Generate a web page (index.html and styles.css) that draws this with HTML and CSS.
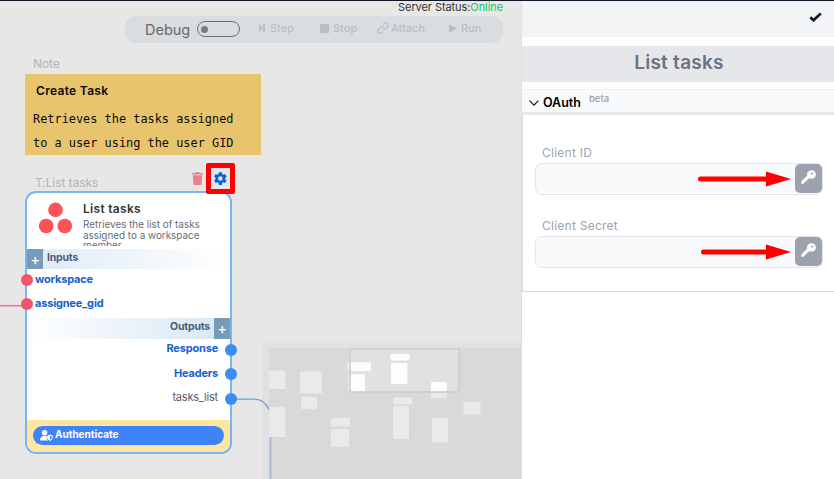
FILE: index.html
```html
<!DOCTYPE html>
<html lang="en">
<head>
<meta charset="utf-8">
<title>List tasks</title>
<link rel="stylesheet" href="styles.css">
</head>
<body>
<div class="app">
  <main class="canvas">
    <div class="status">Server Status:<span class="online">Online</span></div>
    <div class="toolbar">
      <span class="debug">Debug</span>
      <span class="toggle"></span>
      <span class="tool step"><svg width="8" height="10" viewBox="0 0 8 10"><path d="M1 1l4 4-4 4zM5 1h2v8H5z"/></svg>Step</span>
      <span class="tool stop"><svg width="9" height="9" viewBox="0 0 9 9"><path d="M0 0h9v9H0z"/></svg>Stop</span>
      <span class="tool attach"><svg class="link" width="12" height="12" viewBox="0 0 24 24"><path d="M10 13a5 5 0 0 0 7.5.5l4-4a5 5 0 0 0-7-7L12 5M14 11a5 5 0 0 0-7.500-.5l-4 4a5 5 0 0 0 7 7L12 19"/></svg>Attach</span>
      <span class="tool run"><svg width="8" height="9" viewBox="0 0 8 9"><path d="M0 0l8 4.500-8 4.500z"/></svg>Run</span>
    </div>

    <div class="caption note-caption">Note</div>
    <section class="note">
      <h3>Create Task</h3>
      <p>Retrieves the tasks assigned<br>to a user using the user GID</p>
    </section>

    <div class="minimap">
      <svg width="252" height="131" viewBox="269 348 252 131">
        <path class="view" d="M350 349h109v43H350z"/>
        <g class="mini">
          <rect x="269" y="370.500" width="16.500" height="18.500" rx="1.500"/>
          <rect x="300" y="371.500" width="22" height="22" rx="1.500"/>
          <rect x="301" y="397" width="16" height="12" rx="1.500"/>
          <rect x="269" y="407" width="16.500" height="30" rx="1.500"/>
          <rect x="331" y="418" width="19" height="8.500" rx="1.500"/>
          <rect x="331" y="429" width="18" height="18" rx="1.500"/>
          <rect x="393" y="397.500" width="19" height="7" rx="1.500"/>
          <rect x="393" y="406" width="16" height="33" rx="1.500"/>
          <rect x="431" y="382" width="16" height="16.500" rx="1.500"/>
          <rect x="432" y="418" width="16" height="24.500" rx="1.500"/>
          <rect x="463.500" y="402" width="17" height="12.500" rx="1.500"/>
          <rect x="347" y="362" width="24" height="9" rx="1.500"/>
          <rect x="348" y="374" width="17" height="18" rx="1.500"/>
        </g>
        <g class="mini lit">
          <rect x="351" y="362.500" width="20" height="8.500" rx="1"/>
          <rect x="351" y="374.500" width="14" height="17" rx="1"/>
          <rect x="390.500" y="354" width="19" height="6.500" rx="1.500"/>
          <rect x="391" y="363" width="16.500" height="21" rx="1.500"/>
          <rect x="431" y="382" width="16" height="9.500" rx="1.500"/>
        </g>
        <path class="frame" d="M350 349h109v43H350z"/>
      </svg>
    </div>

    <svg class="wires" width="521" height="479" viewBox="0 0 521 479">
      <path class="wire-in" d="M0 305.700H27"/>
      <path class="wire-out" d="M231 399.200H254C261 399.200 266 403 269 409.500"/>
      <path class="wire-out faded" d="M270.500 437V479"/>
    </svg>

    <div class="caption node-caption">T:List tasks</div>
    <svg class="trash" width="11" height="13" viewBox="0 0 11 13"><path d="M0 1h3l1-1h3l1 1h3v1.500H0zM.8 3.300h9.400L9.600 12q-.1 1-1 1H2.400q-.9 0-1-1z"/></svg>
    <div class="highlight"><svg width="16" height="16" viewBox="0 0 24 24"><path d="M19.400 13a7.600 7.600 0 0 0 0-2l2.200-1.700c.2-.1.200-.4.100-.6l-2.100-3.600c-.1-.2-.4-.3-.6-.2l-2.600 1a7.500 7.500 0 0 0-1.700-1l-.4-2.700a.5.5 0 0 0-.5-.4H9.700a.5.5 0 0 0-.5.4l-.4 2.700a7.500 7.500 0 0 0-1.700 1l-2.600-1c-.2-.1-.5 0-.6.200L1.800 8.700c-.1.200-.1.500.1.600L4.100 11a7.600 7.600 0 0 0 0 2l-2.200 1.700c-.2.100-.2.400-.1.600l2.100 3.600c.1.200.4.300.6.200l2.600-1a7.500 7.500 0 0 0 1.700 1l.4 2.700c0 .2.200.4.500.4h4.100c.3 0 .5-.2.500-.4l.4-2.700a7.500 7.500 0 0 0 1.700-1l2.600 1c.2.100.5 0 .6-.2l2.100-3.600c.1-.2.100-.5-.1-.6zM11.750 8.400a3.600 3.600 0 1 1 0 7.200 3.600 3.600 0 0 1 0-7.200z"/></svg></div>

    <section class="node">
      <header class="node-head">
        <svg class="brand" width="34" height="32" viewBox="0 0 34 32"><circle cx="16.500" cy="7.900" r="7.300"/><circle cx="7.200" cy="24" r="7.300"/><circle cx="25.800" cy="24" r="7.300"/></svg>
        <div class="node-info">
          <h2>List tasks</h2>
          <p>Retrieves the list of tasks assigned to a workspace member</p>
        </div>
      </header>
      <div class="band inputs"><span class="plus">+</span><b>Inputs</b></div>
      <div class="ports in">
        <div class="port">workspace<i></i></div>
        <div class="port">assignee_gid<i></i></div>
      </div>
      <div class="band outputs"><b>Outputs</b><span class="plus">+</span></div>
      <div class="ports out">
        <div class="port">Response<i></i></div>
        <div class="port">Headers<i></i></div>
        <div class="port plain">tasks_list<i></i></div>
      </div>
      <footer class="node-foot">
        <div class="auth"><svg width="13" height="11" viewBox="0 0 13 11"><circle cx="4.600" cy="2.800" r="2.700"/><path d="M0 10.500c0-3 1.500-4.500 4-4.500h2l.7.300c0 2 .3 3.300 1.600 4.200zM10 4.500l3 1.200c0 2.500-1 4.300-3 5.200-2-.9-3-2.700-3-5.200z"/><path class="cut" d="M10 5.700v4c1.200-.7 1.900-1.800 2-3.300z"/></svg>Authenticate</div>
      </footer>
    </section>
  </main>

  <aside class="panel">
    <header class="panel-top"><svg width="13" height="10" viewBox="0 0 13 10"><path d="M1.300 5.200l3.200 3L11.800 1.400"/></svg></header>
    <h1>List tasks</h1>
    <div class="section-head"><svg width="10" height="6" viewBox="0 0 10 6"><path d="M.6.700L5 5.100 9.400.7"/></svg><b>OAuth</b><small>beta</small></div>
    <form class="fields">
      <label>Client ID</label>
      <div class="field">
        <svg class="arrow" width="94" height="16" viewBox="0 0 94 16"><path d="M3.500 8H70" class="shaft"/><path d="M69 .5L94 8 69 15.500z"/></svg>
        <span class="key"><svg width="15" height="14" viewBox="0 0 15 14"><path d="M10.300.2a4.200 4.200 0 1 1-.5 8.300L8.200 8.300 6.900 9.600 5.900 9.900 5.500 11.100 4.200 11.400 3.700 12.600 2.300 13.700H.3V11.500L6.200 5.600A4.200 4.200 0 0 1 10.300.2zM11.200 2.400a1.100 1.100 0 1 0 .01 0z"/></svg></span>
      </div>
      <label>Client Secret</label>
      <div class="field">
        <svg class="arrow" width="91" height="16" viewBox="0 0 91 16"><path d="M3.500 8H67" class="shaft"/><path d="M66 .5L91 8 66 15.500z"/></svg>
        <span class="key"><svg width="15" height="14" viewBox="0 0 15 14"><path d="M10.300.2a4.200 4.200 0 1 1-.5 8.300L8.200 8.300 6.900 9.600 5.900 9.900 5.500 11.100 4.200 11.400 3.700 12.600 2.300 13.700H.3V11.500L6.200 5.600A4.200 4.200 0 0 1 10.300.2zM11.200 2.400a1.100 1.100 0 1 0 .01 0z"/></svg></span>
      </div>
    </form>
  </aside>
</div>
</body>
</html>
```

FILE: styles.css
```css
* { box-sizing: border-box; }
body { margin: 0; font-family: Inter, "Liberation Sans", sans-serif; }
h1, h2, h3, p { margin: 0; }
svg { display: block; flex: none; }
.app { display: flex; width: 834px; height: 479px; border-top: 1px solid #111827; overflow: hidden; background: #fff; }

.canvas { position: relative; width: 521px; height: 479px; margin-top: -1px; border-top: 1px solid #111827; background: #e7e7e7; overflow: hidden; flex: none; }
.status { height: 15px; padding-right: 18px; text-align: right; font-size: 11px; line-height: 13px; color: #333; letter-spacing: -.08px; }
.online { color: #22c55e; }
.toolbar { display: flex; align-items: center; width: 378px; height: 27px; margin-left: 125px; padding-left: 20px; border-radius: 11px; background: #d9dde0; font-size: 11px; color: #bcbdbe; white-space: nowrap; }
.debug { width: 52px; margin-top: -1px; font-size: 14.500px; letter-spacing: 0; color: #68696b; }
.toggle { display: flex; align-items: center; width: 43px; height: 16px; margin-top: -1px; padding-left: 3px; border: 1px solid #6d6e70; border-radius: 8px; }
.toggle::before { content: ""; width: 7px; height: 7px; border-radius: 50%; background: #7d7d7d; }
.tool { display: flex; align-items: center; height: 24px; margin-top: -3px; font-weight: 500; }
.tool svg { fill: #bcbdbe; }
.tool .link { fill: none; stroke: #bcbdbe; stroke-width: 2.400; }
.step { margin-left: 18px; gap: 4px; width: 62px; }
.stop { gap: 4px; width: 57px; }
.attach { gap: 2px; width: 72px; }
.run { gap: 4px; }

.wires { position: absolute; left: 0; top: -1px; fill: none; }
.wire-in { stroke: #ee7386; stroke-width: 1.500; }
.wire-out { stroke: #7898dc; stroke-width: 1.300; }
.wire-out.faded { stroke: #abb9d5; stroke-width: 2; }
.caption { position: absolute; font-size: 12px; line-height: 14px; color: #b4b4b4; letter-spacing: -.08px; }
.note-caption { left: 33px; top: 56px; }
.node-caption { left: 35px; top: 175px; }
.note { position: absolute; left: 25px; top: 73px; width: 236px; height: 81px; padding: 9px 8px; background: #e8c46c; color: #0b0b0b; }
.note h3 { padding-left: 3px; font-size: 12px; line-height: 15px; font-weight: 600; letter-spacing: .3px; }
.note p { margin-top: 9px; font: 11.900px/24px "DejaVu Sans Mono", monospace; white-space: nowrap; }
.trash { position: absolute; left: 192px; top: 171px; fill: #f07f8c; }
.highlight { position: absolute; left: 206px; top: 162px; width: 29px; height: 31px; padding: 0 0 1px; display: flex; align-items: center; justify-content: center; border: 5px solid #f00; border-radius: 2px; z-index: 2; }
.highlight svg { width: 15px; height: 15px; fill: #0d64d8; }

.node { position: absolute; left: 25px; top: 190px; width: 207px; height: 263px; display: flex; flex-direction: column; border: 2px solid #78b5f2; border-radius: 11px; background: #fff; }
.node-head { display: flex; height: 56px; padding: 9px 0 0 12px; gap: 10px; }
.node-info { height: 44px; overflow: hidden; }
.node-info h2 { margin-top: -1px; font-size: 12px; line-height: 15px; font-weight: 600; letter-spacing: .3px; color: #333; }
.node-info p { width: 135px; margin-top: 3px; font-size: 9.900px; line-height: 10.500px; color: #666c75; }
.brand { fill: #fc5356; }
.band { display: flex; height: 20px; font-size: 10.500px; line-height: 17px; letter-spacing: -.2px; color: #4b5f7a; }
.band b { font-weight: 700; }
.inputs { gap: 4px; background: linear-gradient(90deg, #dcebf6, #fff); }
.outputs { height: 21px; justify-content: flex-end; gap: 4px; margin-top: 1px; background: linear-gradient(270deg, #d6e7f4, #fff); }
.plus { width: 16px; background: #789bb8; color: #fff; text-align: center; font-size: 15px; line-height: 21px; }
.ports { display: flex; flex-direction: column; font-size: 11px; font-weight: 700; letter-spacing: -.19px; color: #1760cd; }
.port { position: relative; }
.in { height: 48px; padding-left: 8px; }
.in .port { height: 24px; line-height: 20px; }
.out { height: 81px; padding-right: 12px; text-align: right; }
.out .port { height: 24.500px; line-height: 19px; }
.port i { position: absolute; width: 12px; height: 12px; border-radius: 50%; }
.in i { left: -14px; top: 5px; background: #f2546a; }
.out i { right: -18.500px; top: 4.500px; background: #3d8cf7; }
.port.plain { font-weight: 400; letter-spacing: -.2px; color: #555b63; }
.node-foot { flex: 1; padding: 6px; border-radius: 0 0 9px 9px; background: #ffe5a2; }
.auth { display: flex; gap: 2px; height: 19px; padding: 4px 0 0 7px; border-radius: 10px; background: #3f83f8; color: #fff; font-size: 10px; line-height: 9px; font-weight: 700; }
.auth svg { fill: #fff; }
.auth .cut { fill: #3f83f8; }

.minimap { position: absolute; left: 262px; top: 340px; width: 259px; height: 139px; padding: 7px 0 0 7px; background: #e1e1e1; }
.minimap svg { background: #d9d9d9; }
.view { fill: #e1e1e1; }
.frame { fill: none; stroke: #cbcbcb; stroke-width: 1.500; }
.mini { fill: #eaeaea; }
.mini.lit { fill: #fdfdfd; }

.panel { flex: 1; display: flex; flex-direction: column; border-left: 1px solid #dcdee2; }
.panel-top { display: flex; justify-content: flex-end; height: 36px; padding: 11px 12px 0 0; background: #f3f4f6; }
.panel-top path { fill: none; stroke: #111827; stroke-width: 2.700; }
h1 { height: 36px; margin: 9px 0 7px; padding-left: 2px; background: #e5e7eb; text-align: center; font-size: 19px; line-height: 33px; font-weight: 600; letter-spacing: .25px; color: #6b7280; }
.section-head { display: flex; align-items: center; height: 26px; padding-left: 7px; border-top: 1px solid #eef0f3; border-bottom: 3px solid #e5e7eb; background: #f9fafb; }
.section-head svg { margin-top: 3px; }
.section-head path { fill: none; stroke: #111; stroke-width: 1.200; }
.section-head b { margin: 2px 0 0 4px; font-size: 12.500px; font-weight: 600; }
.section-head small { margin: -6px 0 0 8px; font-size: 9.500px; font-weight: 500; color: #9b9fa6; }
.fields { height: 177px; padding: 30px 11px 0 12px; border-left: 1px solid #dcdee2; border-bottom: 1px solid #d7d9de; }
.fields label { display: block; height: 18px; padding-left: 7px; font-size: 12px; line-height: 15px; color: #9ca3af; letter-spacing: .25px; }
.field { display: flex; align-items: center; justify-content: flex-end; height: 32px; margin-bottom: 23px; gap: 4px; border: 1px solid #e3e5e9; border-radius: 7px; background: #f9fafb; }
.arrow { margin-top: -1px; fill: #f00; }
.shaft { stroke: #f00; stroke-width: 5; stroke-linecap: round; }
.key { width: 27px; height: 29px; margin-top: -1px; padding: 6px; border-radius: 5px; background: #9ca3af; }
.key svg { fill: #fff; fill-rule: evenodd; }
```
